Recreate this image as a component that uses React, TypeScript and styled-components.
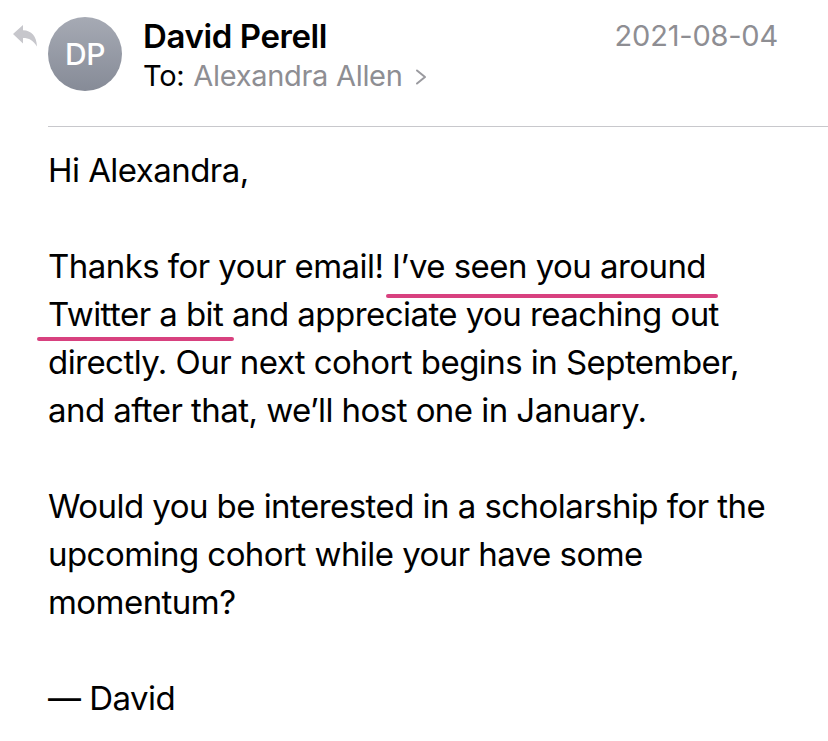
import React from "react";
import styled, { createGlobalStyle } from "styled-components";

const Global = createGlobalStyle`
  html, body { margin: 0; padding: 0; background: #ffffff; }
  body { font-family: Inter, "Noto Sans", "Liberation Sans", sans-serif; color: #000; -webkit-font-smoothing: antialiased; }
`;

const Page = styled.div`
  width: 828px;
  height: 741px;
  overflow: hidden;
  background: #fff;
`;

const Header = styled.header`
  display: flex;
  align-items: flex-start;
  padding: 17px 50px 0 12px;
  height: 126px;
  box-sizing: border-box;
`;

const ReplyIcon = styled.svg`
  width: 26px;
  height: 23px;
  margin-top: 7px;
  margin-right: 10px;
  flex-shrink: 0;
`;

const Avatar = styled.div`
  width: 74px;
  height: 74px;
  border-radius: 50%;
  background: linear-gradient(180deg, #a6aab4 0%, #868b97 100%);
  color: #fff;
  display: flex;
  align-items: center;
  justify-content: center;
  font-size: 30px;
  font-weight: 500;
  letter-spacing: -0.5px;
  flex-shrink: 0;
`;

const Who = styled.div`
  display: flex;
  flex-direction: column;
  margin-left: 21px;
  flex: 1;
`;

const Name = styled.div`
  font-size: 33px;
  font-weight: 600;
  line-height: 38px;
  letter-spacing: -0.4px;
`;

const To = styled.div`
  display: flex;
  align-items: center;
  font-size: 29px;
  line-height: 42px;
  letter-spacing: -0.3px;
`;

const Gray = styled.span`
  color: #8e8e93;
  margin-left: 9px;
`;

const Chevron = styled.svg`
  width: 12px;
  height: 16px;
  margin-left: 12px;
  margin-top: 2px;
`;

const DateText = styled.div`
  font-size: 29px;
  line-height: 38px;
  color: #8e8e93;
  letter-spacing: -0.2px;
`;

const Separator = styled.hr`
  margin: 0 0 0 48px;
  border: 0;
  border-top: 1.5px solid #c8c8cc;
  height: 0;
`;

const Body = styled.div`
  padding: 19px 0 0 48px;
  font-size: 33px;
  line-height: 48px;
  letter-spacing: -0.55px;
`;

const Para = styled.p`
  margin: 0 0 48px 0;
`;

const Mark = styled.span<{ $left: number; $right: number; $drop: number }>`
  position: relative;
  &::after {
    content: "";
    position: absolute;
    left: ${(p) => -p.$left}px;
    right: ${(p) => -p.$right}px;
    bottom: ${(p) => -p.$drop}px;
    height: 4px;
    border-radius: 2px;
    background: #d8417f;
  }
`;

export default function App() {
  return (
    <Page>
      <Global />
      <Header>
        <ReplyIcon viewBox="0 0 26 23">
          <path
            d="M1 10 L11 1 L11 6.2 C19.5 6.4 24.5 12 25 22.5 C21.5 16.5 17 14 11 14 L11 19.5 Z"
            fill="#c7c7cc"
          />
        </ReplyIcon>
        <Avatar>DP</Avatar>
        <Who>
          <Name>David Perell</Name>
          <To>
            To:<Gray>Alexandra Allen</Gray>
            <Chevron viewBox="0 0 12 16">
              <path d="M2 1.5 L10 8 L2 14.5" fill="none" stroke="#9a9a9f" strokeWidth="2" strokeLinecap="round" strokeLinejoin="round" />
            </Chevron>
          </To>
        </Who>
        <DateText>2021-08-04</DateText>
      </Header>
      <Separator />
      <Body>
        <Para>Hi Alexandra,</Para>
        <Para>
          Thanks for your email! <Mark $left={6} $right={12} $drop={12}>I’ve seen you around</Mark>
          <br />
          <Mark $left={11} $right={11} $drop={7}>Twitter a bit</Mark> and appreciate you reaching out
          <br />
          directly. Our next cohort begins in September,
          <br />
          and after that, we’ll host one in January.
        </Para>
        <Para>
          Would you be interested in a scholarship for the
          <br />
          upcoming cohort while your have some
          <br />
          momentum?
        </Para>
        <Para>— David</Para>
      </Body>
    </Page>
  );
}
